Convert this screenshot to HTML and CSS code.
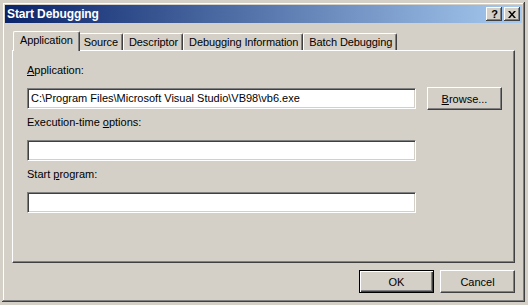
FILE: index.html
```html
<!doctype html>
<html>
  <head>
    <meta charset="utf-8">
    <title>Start Debugging</title>
    <link rel="stylesheet" href="styles.css">
  </head>
  <body>
    <div class="dialog">
      <header class="titlebar">
        <span class="title">Start Debugging</span>
        <div class="caption-buttons">
          <button class="cap-btn help">?</button>
          <button class="cap-btn close">
            <svg width="8" height="7" viewBox="0 0 8 7">
              <path d="M0 0h2l2 2.5 2-2.5h2L5 3.5 8 7H6L4 4.5 2 7H0l3-3.5z" fill="#000"/>
            </svg>
          </button>
        </div>
      </header>

      <div class="content">
        <div class="tabs">
          <div class="tab selected">Application</div>
          <div class="tab">Source</div>
          <div class="tab">Descriptor</div>
          <div class="tab">Debugging Information</div>
          <div class="tab">Batch Debugging</div>
        </div>

        <div class="panel">
          <label class="field-label"><u>A</u>pplication:</label>
          <div class="field-row">
            <div class="edit">C:\Program Files\Microsoft Visual Studio\VB98\vb6.exe</div>
            <button class="btn"><u>B</u>rowse...</button>
          </div>

          <label class="field-label">Execution-time <u>o</u>ptions:</label>
          <div class="field-row">
            <div class="edit"></div>
          </div>

          <label class="field-label">Start <u>p</u>rogram:</label>
          <div class="field-row">
            <div class="edit"></div>
          </div>
        </div>

        <div class="actions">
          <button class="btn default">OK</button>
          <button class="btn">Cancel</button>
        </div>
      </div>
    </div>
  </body>
</html>
```

FILE: styles.css
```css
* {
  box-sizing: border-box;
}

html, body {
  margin: 0;
  background: #d4d0c8;
}

body {
  padding: 2px;
  font-family: 'Liberation Sans', Arial, sans-serif;
  font-size: 11px;
  color: #000;
}

button {
  font-family: inherit;
  font-size: inherit;
  color: inherit;
  margin: 0;
  padding: 0;
  border: 0;
  background: #d4d0c8;
}

u {
  text-decoration: underline;
  text-underline-offset: 1px;
}

/* window frame */
.dialog {
  width: 523px;
  height: 300px;
  padding: 3px;
  display: flex;
  flex-direction: column;
  background: #d4d0c8;
  box-shadow: inset -1px -1px #404040, inset 1px 1px #d4d0c8,
              inset -2px -2px #808080, inset 2px 2px #fff;
}

.titlebar {
  flex: 0 0 18px;
  display: flex;
  align-items: center;
  justify-content: space-between;
  padding: 0 2px;
  background: linear-gradient(to right, #0a246a, #a6caf0);
}

.title {
  color: #fff;
  font-weight: bold;
  font-size: 12px;
  letter-spacing: -0.1px;
}

.caption-buttons {
  display: flex;
  gap: 2px;
}

.cap-btn {
  width: 16px;
  height: 14px;
  display: flex;
  align-items: center;
  justify-content: center;
  box-shadow: inset -1px -1px #404040, inset 1px 1px #fff,
              inset -2px -2px #808080;
}

.cap-btn.help {
  font-weight: bold;
  font-size: 11px;
  line-height: 1;
  padding-left: 1px;
}

.content {
  flex: 1 1 auto;
  display: flex;
  flex-direction: column;
  padding: 9px 7px 7px;
}

/* tab strip */
.tabs {
  display: flex;
  align-items: flex-end;
  height: 18px;
  padding-left: 3px;
}

.tab {
  height: 17px;
  padding: 2px 4px 0 5px;
  border-top: 1px solid #fff;
  border-left: 1px solid #fff;
  border-right: 1px solid #404040;
  border-radius: 2px 2px 0 0;
  box-shadow: inset -1px 0 #808080;
  white-space: nowrap;
  letter-spacing: -0.1px;
}

.tab.selected {
  position: relative;
  z-index: 1;
  height: 20px;
  margin: 0 -2px -1px;
  padding: 2px 6px 0 6px;
  background: #d4d0c8;
}

.panel {
  height: 213px;
  padding: 13px 12px 0 14px;
  border: 1px solid;
  border-color: #fff #404040 #404040 #fff;
  box-shadow: inset -1px -1px #808080;
}

.field-label {
  display: block;
  line-height: 13px;
  margin-bottom: 11px;
}

.field-row {
  display: flex;
  align-items: center;
  gap: 11px;
  height: 21px;
  margin-bottom: 7px;
}

.edit {
  width: 389px;
  height: 21px;
  padding: 3px 3px 0;
  background: #fff;
  border: 1px solid;
  border-color: #808080 #fff #fff #808080;
  box-shadow: inset 1px 1px #404040, inset -1px -1px #d4d0c8;
  white-space: nowrap;
  overflow: hidden;
}

.btn {
  width: 75px;
  height: 23px;
  flex: 0 0 auto;
  border: 1px solid;
  border-color: #fff #404040 #404040 #fff;
  box-shadow: inset -1px -1px #808080;
}

.btn.default {
  border-color: #000;
  box-shadow: inset 1px 1px #fff, inset -1px -1px #404040,
              inset -2px -2px #808080;
}

.actions {
  display: flex;
  justify-content: flex-end;
  gap: 6px;
  margin-top: 7px;
}
```
